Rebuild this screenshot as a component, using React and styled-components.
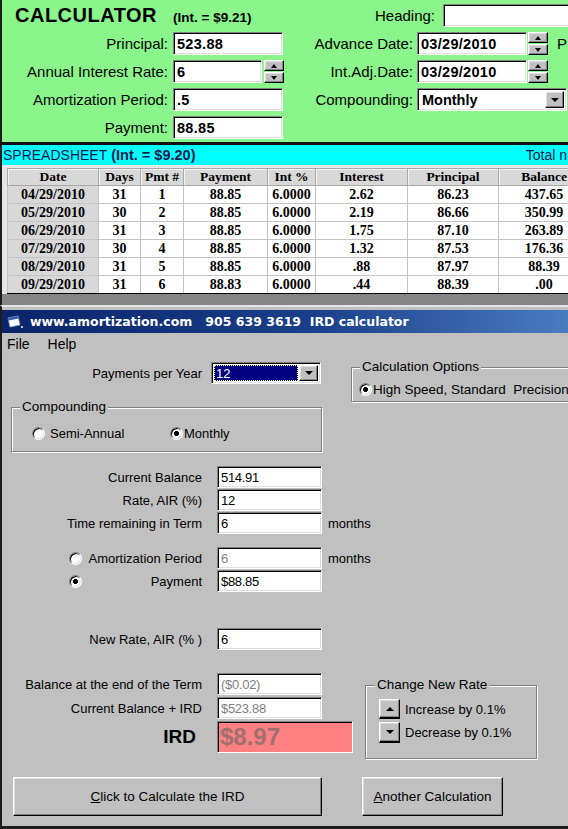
import React from 'react';
import styled, { createGlobalStyle, css } from 'styled-components';

const GlobalStyle = createGlobalStyle`
  html, body {
    margin: 0;
    padding: 0;
    background: #c0c0c0;
  }
  body {
    width: 568px;
    height: 829px;
    overflow: hidden;
    font-family: "Liberation Sans", Arial, sans-serif;
    color: #000;
  }
`;

const sunken = css`
  border-style: solid;
  border-width: 1px;
  border-color: #808080 #fff #fff #808080;
  box-shadow: inset 1px 1px 0 #000, inset -1px -1px 0 #dfdfdf;
`;

const raised = css`
  border-style: solid;
  border-width: 1px;
  border-color: #fff #000 #000 #fff;
  box-shadow: inset -1px -1px 0 #808080, inset 1px 1px 0 #dfdfdf;
  background: #c0c0c0;
`;

const Page = styled.div`
  width: 568px;
  height: 829px;
  overflow: hidden;
  display: flex;
  flex-direction: column;
`;

/* ---------- green calculator ---------- */

const Green = styled.div`
  display: flex;
  height: 145px;
  box-sizing: border-box;
  padding: 4px 0 3px;
  background: #8af58a;
  border-left: 2px solid #1c1c1c;
  border-bottom: 3px solid #101010;
  overflow: hidden;
`;

const Col = styled.div`
  display: flex;
  flex-direction: column;
  gap: 5px;
  width: ${p => p.$w}px;
  flex-shrink: 0;
`;

const TitleRow = styled.div`
  display: flex;
  align-items: baseline;
  height: 23px;
  padding-left: 13px;
`;

const Title = styled.span`
  font-size: 20px;
  font-weight: bold;
  letter-spacing: 0.5px;
  line-height: 23px;
`;

const TitleInt = styled.span`
  font-size: 13.5px;
  font-weight: bold;
  margin-left: 16px;
`;

const Row = styled.div`
  display: flex;
  align-items: center;
  height: ${p => p.$h || 23}px;
  gap: ${p => p.$gap ?? 4}px;
  flex-shrink: 0;
`;

const Label = styled.span`
  width: ${p => p.$w}px;
  flex-shrink: 0;
  text-align: right;
  font-size: 15px;
  white-space: nowrap;
`;

const Field = styled.input`
  ${sunken}
  box-sizing: border-box;
  width: ${p => p.$w}px;
  height: 23px;
  flex-shrink: 0;
  margin: 0;
  padding: 0 3px;
  background: #fff;
  font: bold 14.5px "Liberation Sans", Arial, sans-serif;
  letter-spacing: 0.3px;
  color: #000;
  outline: none;
`;

const Spin = styled.div`
  display: flex;
  flex-direction: column;
  gap: 1px;
  width: 20px;
  height: 23px;
  margin-left: -3px;
`;

const SpinBtn = styled.div`
  ${raised}
  flex: 1;
  display: flex;
  align-items: center;
  justify-content: center;
`;

const Arrow = styled.span`
  width: 0;
  height: 0;
  border-left: ${p => p.$s || 3.5}px solid transparent;
  border-right: ${p => p.$s || 3.5}px solid transparent;
  ${p => (p.$up ? 'border-bottom' : 'border-top')}: ${p => (p.$s || 3.5) + 0.5}px solid #000;
`;

const Combo = styled.div`
  ${sunken}
  box-sizing: border-box;
  width: ${p => p.$w}px;
  height: ${p => p.$h}px;
  display: flex;
  align-items: stretch;
  padding: 2px;
  background: #fff;
  flex-shrink: 0;
`;

const ComboText = styled.span`
  flex: 1;
  display: flex;
  align-items: center;
  padding-left: 2px;
  font: ${p => (p.$bold ? 'bold 14.5px' : '13px')} "Liberation Sans", Arial, sans-serif;
  ${p =>
    p.$selected &&
    css`
      background: #000080;
      color: #fff;
      outline: 1px dotted #ffff80;
      outline-offset: -1px;
      margin-right: 1px;
    `}
`;

const DropBtn = styled.span`
  ${raised}
  width: ${p => p.$w}px;
  display: flex;
  align-items: center;
  justify-content: center;
`;

const Cut = styled.span`
  font-size: 15px;
  margin-left: 5px;
`;

/* ---------- spreadsheet ---------- */

const SheetBar = styled.div`
  display: flex;
  align-items: center;
  height: 20px;
  flex-shrink: 0;
  background: #00ffff;
  border-left: 2px solid #1c1c1c;
  padding-left: 1px;
  color: #0a1a4a;
  font-size: 14px;
  white-space: nowrap;
  overflow: hidden;
`;

const Bold = styled.b`
  margin-left: 4px;
  font-size: 14.5px;
`;

const TotalLabel = styled.span`
  margin-left: auto;
  padding-right: 1px;
`;

const SheetArea = styled.div`
  display: flex;
  flex-direction: column;
  height: 140px;
  flex-shrink: 0;
  background: #e6e6e6;
  border-left: 2px solid #1c1c1c;
  overflow: hidden;
`;

const TableWrap = styled.div`
  padding: 3px 0 0 5px;
`;

const Sheet = styled.table`
  border-collapse: collapse;
  table-layout: fixed;
  width: 582px;
  background: #fff;
  font: bold 14px "Liberation Serif", "Times New Roman", serif;
`;

const HeadCell = styled.th`
  height: 16px;
  padding: 0;
  background: #d8d8d8;
  border: 1px solid #a8a8a8;
  font-weight: bold;
  font-size: 13.5px;
  text-align: center;
  box-shadow: inset 1px 1px 0 #f4f4f4;
`;

const Cell = styled.td`
  height: 17px;
  padding: 0;
  text-align: center;
  border: 1px solid #c4c4c4;
  background: ${p => (p.$fixed ? '#d8d8d8' : '#fff')};
  tr:last-child > & {
    border-bottom-color: #000;
  }
`;

const Band = styled.div`
  flex: 1;
  background: #858585;
`;

/* ---------- IRD window ---------- */

const WindowEdge = styled.div`
  height: 3px;
  flex-shrink: 0;
  border-top: 2px solid #e4e4e4;
  border-left: 2px solid #1c1c1c;
  background: #c0c0c0;
`;

const TitleBar = styled.div`
  height: 23px;
  flex-shrink: 0;
  display: flex;
  align-items: center;
  gap: 6px;
  padding-left: 5px;
  border-left: 2px solid #1c1c1c;
  background: linear-gradient(90deg, #0a246a 0%, #1a3f8a 55%, #4a7cc0 100%);
  color: #fff;
  font: bold 12.5px "DejaVu Sans", Verdana, sans-serif;
  white-space: pre;
`;

const Form = styled.div`
  flex: 1;
  display: flex;
  flex-direction: column;
  background: #c0c0c0;
  border-left: 2px solid #1c1c1c;
  border-bottom: 3px solid #1c1c1c;
  font-size: 13px;
`;

const Menu = styled.div`
  display: flex;
  align-items: center;
  gap: 18px;
  height: 22px;
  padding-left: 5px;
  font-size: 14px;
  flex-shrink: 0;
`;

const TopSection = styled.div`
  display: flex;
  align-items: flex-start;
  flex-shrink: 0;
`;

const Stack = styled.div`
  display: flex;
  flex-direction: column;
  width: ${p => p.$w}px;
  flex-shrink: 0;
  gap: ${p => p.$gap || 0}px;
`;

const PayRow = styled(Row)`
  margin-top: 7px;
`;

const Group = styled.fieldset`
  box-sizing: border-box;
  width: ${p => p.$w}px;
  height: ${p => p.$h}px;
  margin: ${p => p.$m};
  padding: 0;
  border: 1px solid #808080;
  box-shadow: inset 1px 1px 0 #fff, 1px 1px 0 #fff;
  flex-shrink: 0;
`;

const Legend = styled.legend`
  margin-left: ${p => p.$ml}px;
  padding: 0 2px;
  line-height: 16px;
  background: #c0c0c0;
  font-size: 13.5px;
`;

const GroupBody = styled.div`
  display: flex;
  flex-direction: ${p => (p.$column ? 'column' : 'row')};
  gap: ${p => p.$gap || 0}px;
  padding: ${p => p.$pad};
`;

const Option = styled.label`
  display: flex;
  align-items: center;
  height: 16px;
  gap: ${p => p.$gap ?? 5}px;
  width: ${p => (p.$w ? `${p.$w}px` : 'auto')};
  white-space: nowrap;
  font-size: ${p => p.$fs || 13}px;
`;

const Radio = styled.span`
  box-sizing: border-box;
  width: 13px;
  height: 13px;
  flex-shrink: 0;
  border-radius: 50%;
  border: 1px solid;
  border-color: #808080 #fff #fff #808080;
  box-shadow: inset 1px 1px 0 #000, inset -1px -1px 0 #dfdfdf;
  background: ${p =>
    p.$checked ? 'radial-gradient(circle, #000 0 2.2px, #fff 2.8px)' : '#fff'};
  margin-left: ${p => p.$ml || 0}px;
`;

const FormLabel = styled.span`
  box-sizing: border-box;
  width: ${p => p.$w || 215}px;
  padding-right: ${p => p.$pr ?? 15}px;
  flex-shrink: 0;
  display: flex;
  align-items: center;
  justify-content: flex-end;
  white-space: nowrap;
  ${Radio} {
    margin-right: auto;
  }
`;

const FormInput = styled.input`
  ${sunken}
  box-sizing: border-box;
  width: ${p => p.$w || 105}px;
  height: 22px;
  flex-shrink: 0;
  margin: 0;
  padding: 0 3px;
  background: #fff;
  font: 13px "Liberation Sans", Arial, sans-serif;
  letter-spacing: -0.3px;
  color: ${p => (p.$dim ? '#808080' : '#000')};
  outline: none;
`;

const Unit = styled.span`
  margin-left: 6px;
`;

const Fields = styled.div`
  display: flex;
  flex-direction: column;
  gap: ${p => p.$gap || 1}px;
  margin-top: ${p => p.$mt}px;
  flex-shrink: 0;
`;

const IrdLabel = styled(FormLabel)`
  font-size: 19px;
  font-weight: bold;
  padding-right: 21px;
`;

const IrdValue = styled.input`
  box-sizing: border-box;
  width: 136px;
  height: 32px;
  margin: 0;
  padding: 0 2px;
  border-style: solid;
  border-width: 1px;
  border-color: #808080 #fff #fff #808080;
  box-shadow: inset 1px 1px 0 #000;
  background: #ff8080;
  color: #a07070;
  font: bold 24px "Liberation Sans", Arial, sans-serif;
  outline: none;
`;

const BottomSection = styled.div`
  display: flex;
  align-items: flex-start;
  margin-top: 23px;
  flex-shrink: 0;
`;

const StepRow = styled.div`
  display: flex;
  align-items: center;
  gap: 5px;
`;

const StepBtn = styled.span`
  ${raised}
  box-sizing: border-box;
  width: 21px;
  height: ${p => p.$h}px;
  display: flex;
  align-items: center;
  justify-content: center;
  border-bottom: 2px solid #000;
`;

const Buttons = styled.div`
  display: flex;
  gap: 40px;
  margin-top: 18px;
  padding-left: 11px;
  flex-shrink: 0;
`;

const Button = styled.button`
  ${raised}
  box-sizing: border-box;
  width: ${p => p.$w}px;
  height: 39px;
  margin: 0;
  padding: 0;
  font: 13.5px "Liberation Sans", Arial, sans-serif;
  color: #000;
  u {
    text-decoration: underline;
  }
`;

function WinIcon() {
  return (
    <svg width="17" height="14" viewBox="0 0 17 14">
      <path d="M1 3 L11 1 L13 10 L3 12 Z" fill="#fff" stroke="#8aa0c0" strokeWidth="0.8" />
      <path d="M1 3 L11 1 L11.6 3.6 L1.6 5.6 Z" fill="#3060b0" />
      <rect x="14" y="11" width="2" height="2" fill="#c0c8d8" />
    </svg>
  );
}

const rows = [
  ['04/29/2010', '31', '1', '88.85', '6.0000', '2.62', '86.23', '437.65'],
  ['05/29/2010', '30', '2', '88.85', '6.0000', '2.19', '86.66', '350.99'],
  ['06/29/2010', '31', '3', '88.85', '6.0000', '1.75', '87.10', '263.89'],
  ['07/29/2010', '30', '4', '88.85', '6.0000', '1.32', '87.53', '176.36'],
  ['08/29/2010', '31', '5', '88.85', '6.0000', '.88', '87.97', '88.39'],
  ['09/29/2010', '31', '6', '88.83', '6.0000', '.44', '88.39', '.00'],
];

const heads = ['Date', 'Days', 'Pmt #', 'Payment', 'Int %', 'Interest', 'Principal', 'Balance'];
const widths = [91, 42, 43, 84, 48, 92, 91, 91];

export default function App() {
  return (
    <Page>
      <GlobalStyle />
      <Green>
        <Col $w={286}>
          <TitleRow>
            <Title>CALCULATOR</Title>
            <TitleInt>(Int. = $9.21)</TitleInt>
          </TitleRow>
          <Row $gap={5}>
            <Label $w={166}>Principal:</Label>
            <Field $w={110} value="523.88" readOnly />
          </Row>
          <Row $gap={5}>
            <Label $w={166}>Annual Interest Rate:</Label>
            <Field $w={89} value="6" readOnly />
            <Spin>
              <SpinBtn><Arrow $up /></SpinBtn>
              <SpinBtn><Arrow /></SpinBtn>
            </Spin>
          </Row>
          <Row $gap={5}>
            <Label $w={166}>Amortization Period:</Label>
            <Field $w={110} value=".5" readOnly />
          </Row>
          <Row $gap={5}>
            <Label $w={166}>Payment:</Label>
            <Field $w={110} value="88.85" readOnly />
          </Row>
        </Col>
        <Col $w={290}>
          <Row $gap={8}>
            <Label $w={147}>Heading:</Label>
            <Field $w={140} value="" readOnly />
          </Row>
          <Row $gap={4}>
            <Label $w={125}>Advance Date:</Label>
            <Field $w={110} value="03/29/2010" readOnly />
            <Spin>
              <SpinBtn><Arrow $up /></SpinBtn>
              <SpinBtn><Arrow /></SpinBtn>
            </Spin>
            <Cut>P</Cut>
          </Row>
          <Row $gap={4}>
            <Label $w={125}>Int.Adj.Date:</Label>
            <Field $w={110} value="03/29/2010" readOnly />
            <Spin>
              <SpinBtn><Arrow $up /></SpinBtn>
              <SpinBtn><Arrow /></SpinBtn>
            </Spin>
          </Row>
          <Row $gap={4}>
            <Label $w={125}>Compounding:</Label>
            <Combo $w={150} $h={23}>
              <ComboText $bold>Monthly</ComboText>
              <DropBtn $w={17}><Arrow $s={4} /></DropBtn>
            </Combo>
          </Row>
        </Col>
      </Green>

      <SheetBar>
        SPREADSHEET<Bold>(Int. = $9.20)</Bold>
        <TotalLabel>Total n</TotalLabel>
      </SheetBar>
      <SheetArea>
        <TableWrap>
          <Sheet>
            <colgroup>
              {widths.map((w, i) => (
                <col key={i} style={{ width: w }} />
              ))}
            </colgroup>
            <thead>
              <tr>
                {heads.map(h => (
                  <HeadCell key={h}>{h}</HeadCell>
                ))}
              </tr>
            </thead>
            <tbody>
              {rows.map(r => (
                <tr key={r[0]}>
                  {r.map((v, i) => (
                    <Cell key={i} $fixed={i === 0}>{v}</Cell>
                  ))}
                </tr>
              ))}
            </tbody>
          </Sheet>
        </TableWrap>
        <Band />
      </SheetArea>

      <WindowEdge />
      <TitleBar>
        <WinIcon />
        {'www.amortization.com   905 639 3619  IRD calculator'}
      </TitleBar>

      <Form>
        <Menu>
          <span>File</span>
          <span>Help</span>
        </Menu>

        <TopSection>
          <Stack $w={320}>
            <PayRow $h={22} $gap={9}>
              <FormLabel $w={200} $pr={0}>Payments per Year</FormLabel>
              <Combo $w={110} $h={22}>
                <ComboText $selected>12</ComboText>
                <DropBtn $w={17}><Arrow $s={4} /></DropBtn>
              </Combo>
            </PayRow>
            <Group $w={311} $h={53} $m="15px 0 0 9px">
              <Legend $ml={8}>Compounding</Legend>
              <GroupBody $pad="10px 0 0 20px">
                <Option $w={138}>
                  <Radio />
                  Semi-Annual
                </Option>
                <Option $gap={1}>
                  <Radio $checked />
                  Monthly
                </Option>
              </GroupBody>
            </Group>
          </Stack>
          <Group $w={240} $h={43} $m="4px 0 0 29px">
            <Legend $ml={8}>Calculation Options</Legend>
            <GroupBody $pad="6px 0 0 7px">
              <Option $gap={1} $fs={13.5}>
                <Radio $checked />
                High Speed, Standard&nbsp; Precision
              </Option>
            </GroupBody>
          </Group>
        </TopSection>

        <Fields $mt={14}>
          <Row $h={22} $gap={0}>
            <FormLabel>Current Balance</FormLabel>
            <FormInput value="514.91" readOnly />
          </Row>
          <Row $h={22} $gap={0}>
            <FormLabel>Rate, AIR (%)</FormLabel>
            <FormInput value="12" readOnly />
          </Row>
          <Row $h={22} $gap={0}>
            <FormLabel>Time remaining in Term</FormLabel>
            <FormInput value="6" readOnly />
            <Unit>months</Unit>
          </Row>
        </Fields>

        <Fields $mt={13}>
          <Row $h={22} $gap={0}>
            <FormLabel>
              <Radio $ml={67} />
              Amortization Period
            </FormLabel>
            <FormInput value="6" $dim readOnly />
            <Unit>months</Unit>
          </Row>
          <Row $h={22} $gap={0}>
            <FormLabel>
              <Radio $ml={67} $checked />
              Payment
            </FormLabel>
            <FormInput value="$88.85" readOnly />
          </Row>
        </Fields>

        <Fields $mt={36}>
          <Row $h={22} $gap={0}>
            <FormLabel>New Rate, AIR (% )</FormLabel>
            <FormInput value="6" readOnly />
          </Row>
        </Fields>

        <BottomSection>
          <Stack $w={350} $gap={2}>
            <Row $h={22} $gap={0}>
              <FormLabel>Balance at the end of the Term</FormLabel>
              <FormInput value="($0.02)" $dim readOnly />
            </Row>
            <Row $h={22} $gap={0}>
              <FormLabel>Current Balance + IRD</FormLabel>
              <FormInput value="$523.88" $dim readOnly />
            </Row>
            <Row $h={32} $gap={0}>
              <IrdLabel>IRD</IrdLabel>
              <IrdValue value="$8.97" readOnly />
            </Row>
          </Stack>
          <Group $w={172} $h={82} $m="4px 0 0 13px">
            <Legend $ml={9}>Change New Rate</Legend>
            <GroupBody $column $gap={3} $pad="6px 0 0 13px">
              <StepRow>
                <StepBtn $h={20}><Arrow $up $s={4} /></StepBtn>
                Increase by 0.1%
              </StepRow>
              <StepRow>
                <StepBtn $h={21}><Arrow $s={4} /></StepBtn>
                Decrease by 0.1%
              </StepRow>
            </GroupBody>
          </Group>
        </BottomSection>

        <Buttons>
          <Button $w={309}>
            <u>C</u>lick to Calculate the IRD
          </Button>
          <Button $w={141}>
            <u>A</u>nother Calculation
          </Button>
        </Buttons>
      </Form>
    </Page>
  );
}
